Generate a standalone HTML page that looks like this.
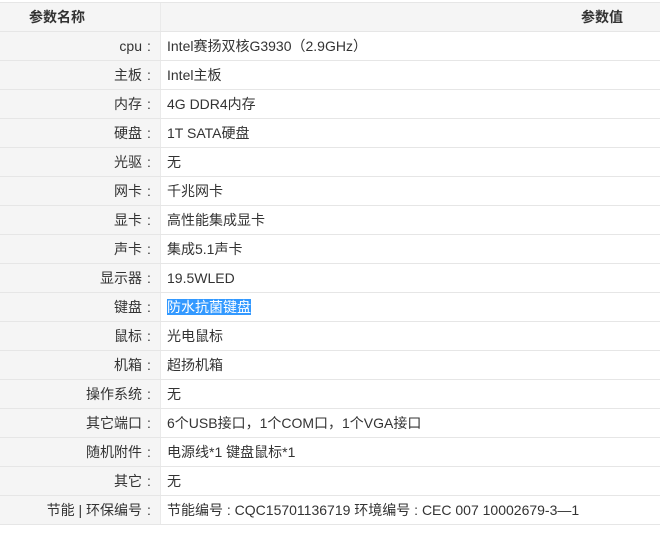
<!DOCTYPE html>
<html><head><meta charset="utf-8"><style>
body{margin:0;width:660px;height:538px;background:#fff;font-family:"Liberation Sans","Noto Sans CJK SC",sans-serif;font-size:14px;color:#333;position:relative;overflow:hidden}
.r{position:absolute;left:0;width:660px;height:28px;border-bottom:1px solid #e6e6e6;line-height:29px}
.l{position:absolute;left:0;top:0;width:160px;height:28px;background:#f5f5f5;text-align:right;box-sizing:border-box;padding-right:4px;white-space:nowrap}
.v{position:absolute;left:161px;top:0;height:28px;padding-left:6px;white-space:nowrap}
.d{position:absolute;left:160px;top:0;width:1px;height:28px;background:#eaeaea}
.c{display:inline-block;width:14px;text-align:center}
.h{background:#f5f5f5;font-weight:bold;color:#333;font-size:14px}
.h .l{text-align:left;padding-left:29px}
.sel{background:#3399ff;color:#fff}
</style></head><body>
<div style="position:absolute;left:0;top:2px;width:660px;height:1px;background:#e6e6e6"></div>
<div class="r h" style="top:3px"><div class="l">参数名称</div><div class="d"></div><div style="position:absolute;right:37px;top:0">参数值</div></div>
<div class="r" style="top:32px"><div class="l">cpu<span class="c">:</span></div><div class="d"></div><div class="v">Intel赛扬双核G3930（2.9GHz）</div></div>
<div class="r" style="top:61px"><div class="l">主板<span class="c">:</span></div><div class="d"></div><div class="v">Intel主板</div></div>
<div class="r" style="top:90px"><div class="l">内存<span class="c">:</span></div><div class="d"></div><div class="v">4G DDR4内存</div></div>
<div class="r" style="top:119px"><div class="l">硬盘<span class="c">:</span></div><div class="d"></div><div class="v">1T SATA硬盘</div></div>
<div class="r" style="top:148px"><div class="l">光驱<span class="c">:</span></div><div class="d"></div><div class="v">无</div></div>
<div class="r" style="top:177px"><div class="l">网卡<span class="c">:</span></div><div class="d"></div><div class="v">千兆网卡</div></div>
<div class="r" style="top:206px"><div class="l">显卡<span class="c">:</span></div><div class="d"></div><div class="v">高性能集成显卡</div></div>
<div class="r" style="top:235px"><div class="l">声卡<span class="c">:</span></div><div class="d"></div><div class="v">集成5.1声卡</div></div>
<div class="r" style="top:264px"><div class="l">显示器<span class="c">:</span></div><div class="d"></div><div class="v">19.5WLED</div></div>
<div class="r" style="top:293px"><div class="l">键盘<span class="c">:</span></div><div class="d"></div><div class="v"><span class="sel">防水抗菌键盘</span></div></div>
<div class="r" style="top:322px"><div class="l">鼠标<span class="c">:</span></div><div class="d"></div><div class="v">光电鼠标</div></div>
<div class="r" style="top:351px"><div class="l">机箱<span class="c">:</span></div><div class="d"></div><div class="v">超扬机箱</div></div>
<div class="r" style="top:380px"><div class="l">操作系统<span class="c">:</span></div><div class="d"></div><div class="v">无</div></div>
<div class="r" style="top:409px"><div class="l">其它端口<span class="c">:</span></div><div class="d"></div><div class="v">6个USB接口，1个COM口，1个VGA接口</div></div>
<div class="r" style="top:438px"><div class="l">随机附件<span class="c">:</span></div><div class="d"></div><div class="v">电源线*1 键盘鼠标*1</div></div>
<div class="r" style="top:467px"><div class="l">其它<span class="c">:</span></div><div class="d"></div><div class="v">无</div></div>
<div class="r" style="top:496px"><div class="l">节能 | 环保编号<span class="c">:</span></div><div class="d"></div><div class="v">节能编号 : CQC15701136719 环境编号 : CEC 007 10002679-3—1</div></div>
</body></html>
